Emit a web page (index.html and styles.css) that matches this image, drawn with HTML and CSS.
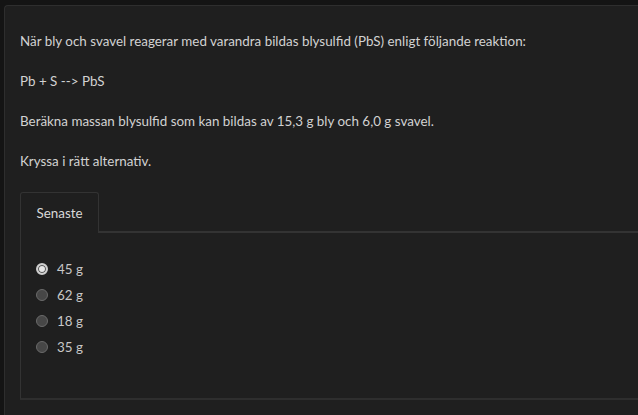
FILE: index.html
```html
<!DOCTYPE html>
<html lang="sv">
<head>
    <meta charset="UTF-8">
    <meta name="viewport" content="width=device-width, initial-scale=1.0">
    <title>Fråga</title>
    <link rel="stylesheet" href="styles.css">
</head>
<body>
    <div class="card">
        <div class="question">
            <p>När bly och svavel reagerar med varandra bildas blysulfid (PbS) enligt följande reaktion:</p>
            <p>Pb + S --&gt; PbS</p>
            <p>Beräkna massan blysulfid som kan bildas av 15,3 g bly och 6,0 g svavel.</p>
            <p>Kryssa i rätt alternativ.</p>
        </div>

        <div class="tabs">
            <div class="tab-bar">
                <div class="tab active">Senaste</div>
                <div class="tab-rest"></div>
            </div>
            <div class="tab-panel">
                <label class="option"><span class="radio checked"></span>45 g</label>
                <label class="option"><span class="radio"></span>62 g</label>
                <label class="option"><span class="radio"></span>18 g</label>
                <label class="option"><span class="radio"></span>35 g</label>
            </div>
        </div>
    </div>
</body>
</html>
```

FILE: styles.css
```css
body {
    font-family: Lato, "Open Sans", sans-serif;
    font-size: 13.4px;
    background-color: #141414;
    color: #d2d2d2;
    margin: 0;
    padding: 5px 0 0 4px;
    overflow: hidden;
}
.card {
    background: #1f1f1f;
    border: 1px solid #2e2e2e;
    border-right: none;
    border-bottom: none;
    border-radius: 4px 0 0 0;
    padding: 25px 0 30px 15px;
    height: 420px;
    box-sizing: border-box;
}
.question p {
    margin: 0 0 20px;
    line-height: 20px;
}
.tabs {
    margin-top: 21px;
}
.tab-bar {
    display: flex;
}
.tab {
    width: 79px;
    height: 41px;
    box-sizing: border-box;
    border: 1px solid #333;
    border-bottom: none;
    border-radius: 3px 3px 0 0;
    padding-top: 12px;
    text-align: center;
    color: #d8d8d8;
}
.tab-rest {
    flex: 1;
    border-bottom: 2px solid #333;
}
.tab-panel {
    border-left: 1px solid #333;
    border-bottom: 2px solid #2e2e2e;
    height: 167px;
    padding: 23px 0 0 15px;
    box-sizing: border-box;
}
.option {
    display: flex;
    align-items: center;
    height: 26px;
    color: #c8c8c8;
}
.radio {
    width: 12px;
    height: 12px;
    border-radius: 50%;
    border: 1px solid #6a6a6a;
    background: #474747;
    margin-right: 9px;
    box-sizing: border-box;
}
.radio.checked {
    border: 2px solid #cfcfcf;
    background: #e6e6e6;
    box-shadow: inset 0 0 0 1px #555;
}
```
